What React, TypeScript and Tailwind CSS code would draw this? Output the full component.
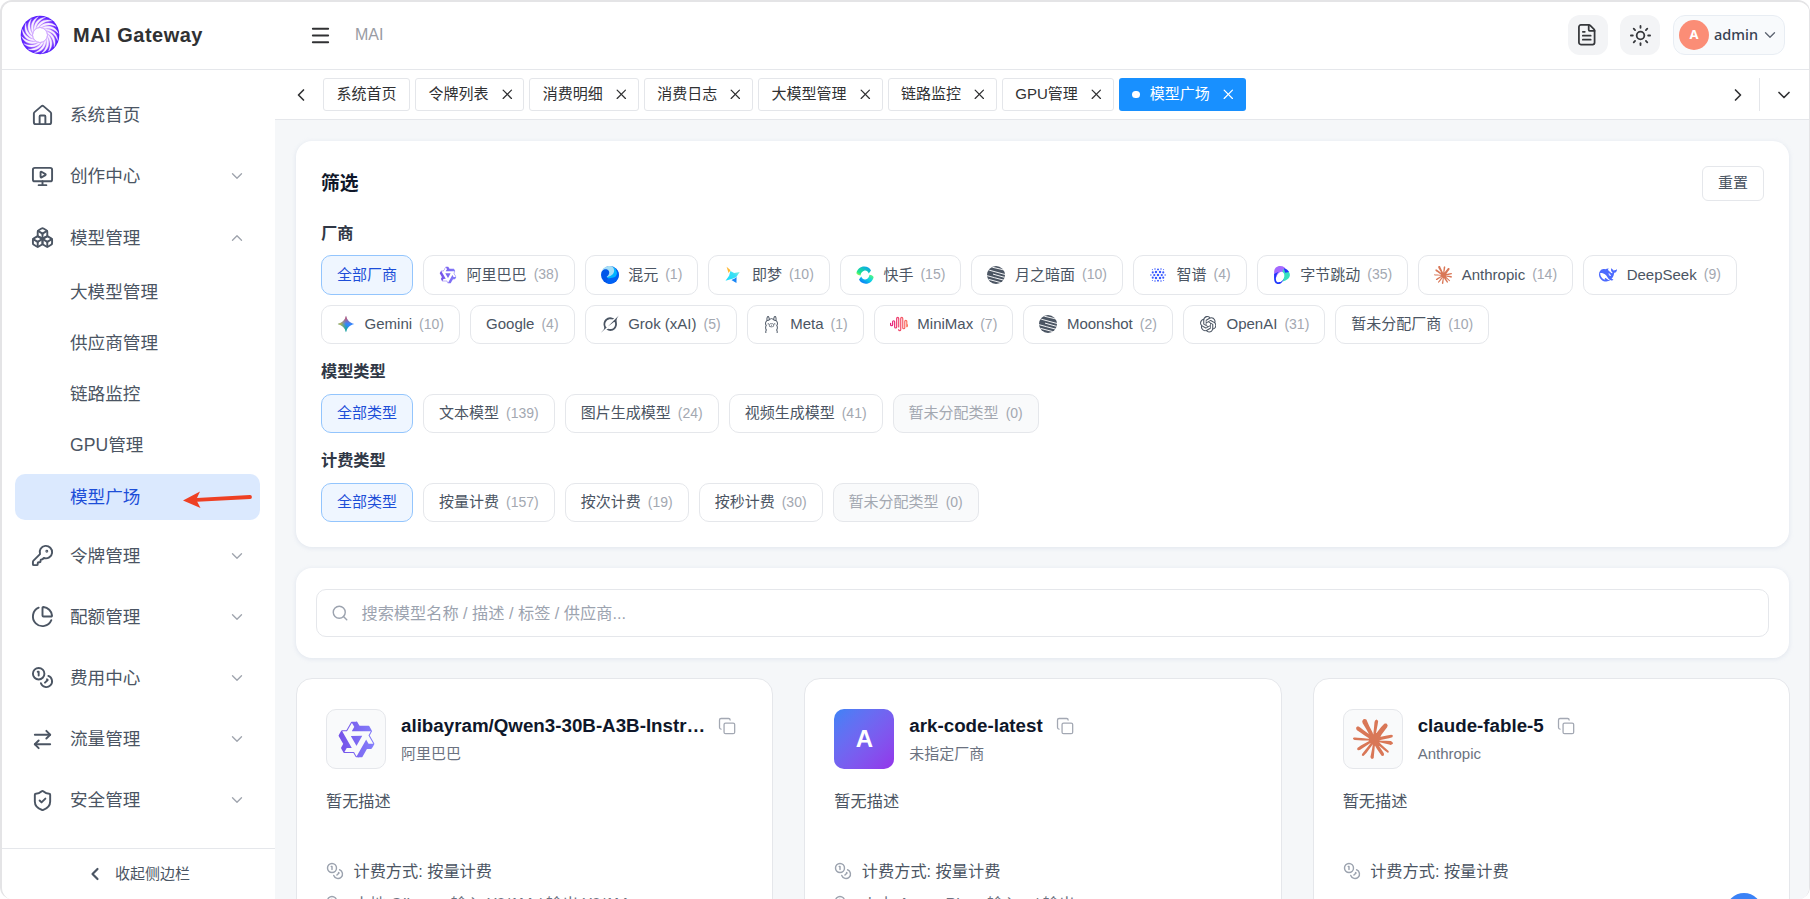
import type { ReactNode } from 'react';
import {
  ArrowRightLeft, Boxes, ChevronDown, ChevronLeft, ChevronRight, ChevronUp, Coins, Copy,
  FileText, House, KeyRound, Menu, MonitorPlay, ChartPie, Search, ShieldCheck, Sun, X,
} from 'lucide-react';
import { SiClaude, SiOllama, SiOpenai } from 'react-icons/si';

/* ---------- brand marks ---------- */

function GatewayLogo() {
  const blades = Array.from({ length: 16 }, (_, i) => i * 22.5);
  return (
    <svg viewBox="0 0 40 40" className="size-10 shrink-0">
      <defs>
        <radialGradient id="gw" gradientUnits="userSpaceOnUse" cx="20" cy="20" r="20">
          <stop offset="0.35" stopColor="#c58cff" />
          <stop offset="0.7" stopColor="#8f4dff" />
          <stop offset="1" stopColor="#4a12ff" />
        </radialGradient>
      </defs>
      <circle cx="20" cy="20" r="19.300" fill="url(#gw)" />
      {blades.map((a) => (
        <path
          key={a}
          d="M19 12.500C24 7 31.500 6.500 36.300 11.500 31 9 25 9.500 21 12.800z"
          fill="#f8f1ff"
          stroke="#f8f1ff"
          strokeWidth="0.300"
          transform={`rotate(${a} 20 20)`}
        />
      ))}
      <circle cx="20" cy="20" r="7" fill="#fff" />
      <circle cx="20" cy="20" r="7.600" fill="none" stroke="#d3adff" strokeWidth="1" />
    </svg>
  );
}

function Qwen({ className }: { className: string }) {
  return (
    <svg viewBox="0 0 24 24" className={className} fillRule="evenodd">
      <defs>
        <linearGradient id="qw" x1="0" x2="1" y1="0" y2="0">
          <stop offset="0" stopColor="#7450e8" />
          <stop offset="1" stopColor="#8580fb" />
        </linearGradient>
      </defs>
      <path
        fill="url(#qw)"
        d="M12.604 1.34c.393.69.784 1.382 1.174 2.075a.18.18 0 00.157.091h5.552c.174 0 .322.11.446.327l1.454 2.57c.19.337.24.478.024.837-.26.43-.513.864-.76 1.3l-.367.658c-.106.196-.223.28-.04.512l2.652 4.637c.172.301.111.494-.043.77-.437.785-.882 1.564-1.335 2.34-.159.272-.352.375-.68.37-.777-.016-1.552-.01-2.327.016a.099.099 0 00-.081.05 575.097 575.097 0 01-2.705 4.74c-.169.293-.38.363-.725.364-.997.003-2.002.004-3.017.002a.537.537 0 01-.465-.271l-1.335-2.323a.09.09 0 00-.083-.049H4.982c-.285.03-.553-.001-.805-.092l-1.603-2.77a.543.543 0 01-.002-.54l1.207-2.12a.198.198 0 000-.197 550.951 550.951 0 01-1.875-3.272l-.79-1.395c-.16-.31-.173-.496.095-.965.465-.813.927-1.625 1.387-2.436.132-.234.304-.334.584-.335a338.3 338.3 0 012.589-.001.124.124 0 00.107-.063l2.806-4.895a.488.488 0 01.422-.246c.524-.001 1.053 0 1.583-.006L11.704 1c.341-.003.724.032.9.34zm-3.432.403a.06.06 0 00-.052.03L6.254 6.788a.157.157 0 01-.135.078H3.253c-.056 0-.07.025-.041.074l5.81 10.156c.025.042.013.062-.034.063l-2.795.015a.218.218 0 00-.2.116l-1.32 2.31c-.044.078-.021.118.068.118l5.716.008c.046 0 .08.02.104.061l1.403 2.454c.046.081.092.082.139 0l5.006-8.76.783-1.382a.055.055 0 01.096 0l1.424 2.53a.122.122 0 00.107.062l2.763-.02a.04.04 0 00.035-.02.041.041 0 000-.04l-2.9-5.086a.108.108 0 010-.113l.293-.507 1.12-1.977c.024-.041.012-.062-.035-.062H9.2c-.059 0-.073-.026-.043-.077l1.434-2.505a.107.107 0 000-.114L9.225 1.774a.06.06 0 00-.053-.031zm6.29 8.02c.046 0 .058.02.034.06l-.832 1.465-2.613 4.585a.056.056 0 01-.05.029.058.058 0 01-.05-.029L8.498 9.841c-.02-.034-.01-.052.028-.054l.216-.012 6.722-.012z"
      />
    </svg>
  );
}

function Hunyuan() {
  return (
    <svg viewBox="0 0 24 24" className="size-[18px]">
      <circle cx="12" cy="12" r="12" fill="#0055e9" />
      <path d="M12 0C6.500 0 2.500 3 1 7c2.500-3.500 7-3.500 9-1 2.200 3 .5 6-2.500 8.500 4 2.500 10 1.500 12-3C21.500 6.500 18 .5 12 0z" fill="#a8dff5" />
      <path d="M15 .8c3 2.700 3.500 7 1 9.700-2 2.200-5 3-8 4.500 2 3 7.500 3.500 11 .5 3-2.700 3-7.500 1-10.500C18.500 2.700 17 1.500 15 .8z" fill="#00b4ff" />
      <path d="M20.500 3.800C24 8 25 15 20 20c-3 2.800-7 4.200-10.500 3.500-3-2-2.500-5.500.5-7 4-1.500 9 0 11-5 .8-2.700.5-5.500-.5-7.700z" fill="#0062f5" />
    </svg>
  );
}

function Jimeng() {
  return (
    <svg viewBox="0 0 24 24" className="size-[18px]">
      <defs>
        <linearGradient id="jm" x1="0" x2="1" y1="1" y2="0">
          <stop offset="0" stopColor="#18e0ff" />
          <stop offset="0.6" stopColor="#39dff5" />
          <stop offset="1" stopColor="#9af3d8" />
        </linearGradient>
      </defs>
      <path d="M3.500 1l5.200 4.600-2.600 3.800z" fill="#ffb62e" />
      <path d="M8.500 6.500L13.500 9.300l7.500-1.300-4.600 6.500-4.200 2.300L2 19.500l4.800-6.500z" fill="url(#jm)" />
      <path d="M16.800 14.500l-.2 8-6.800-3.700 4.500-2.300z" fill="#1a86f5" />
    </svg>
  );
}

function Kling() {
  return (
    <svg viewBox="0 0 24 24" className="size-[18px]">
      <defs>
        <linearGradient id="kl1" x1="0" x2="1" y1="1" y2="0">
          <stop offset="0" stopColor="#d8ff3a" />
          <stop offset="0.25" stopColor="#1ce88c" />
          <stop offset="1" stopColor="#0797ff" />
        </linearGradient>
        <linearGradient id="kl2" x1="0" x2="1" y1="1" y2="0">
          <stop offset="0" stopColor="#0760ff" />
          <stop offset="0.6" stopColor="#10d8e0" />
          <stop offset="1" stopColor="#6cff5a" />
        </linearGradient>
      </defs>
      <path d="M.5 9.500C1.500 4 6 .5 11 .5c4 0 7.500 2 9 5.500l-3 4C16 7 13.500 5.500 11.500 6 8.500 7 6.500 9 6 12.500 4 12.500 1.800 11.500.5 9.500z" fill="url(#kl1)" />
      <path d="M23.500 14.500C22.500 20 18 23.500 13 23.500c-4 0-7.500-2-9-5.500l3-4c1 3 3.500 4.500 5.500 4 3-1 5-3 5.500-6.500 2 0 4.200 1 5.500 3z" fill="url(#kl2)" />
    </svg>
  );
}

function Moonshot() {
  return (
    <svg viewBox="0 0 24 24" className="size-[18px]">
      <defs>
        <clipPath id="ms"><circle cx="12" cy="12" r="12" /></clipPath>
      </defs>
      <g clipPath="url(#ms)">
        <rect width="24" height="24" fill="#4b5563" />
        <g fill="none" stroke="#fff" strokeWidth="1.250">
          <path d="M7 1.600L25 5.800" />
          <path d="M3 5.600L25 11.600" />
          <path d="M8 10.800L25 15.600" />
          <path d="M-1 12.600L10 15.600L25 19.600" />
          <path d="M2 17.800L20 22.600" />
        </g>
      </g>
    </svg>
  );
}

const zhipuDots: [number, number, number][] = [
  [12, 12, 1.7],
  [9.3, 8, 1.6], [14.7, 8, 1.6], [9.3, 16, 1.6], [14.7, 16, 1.6], [7, 12, 1.5], [17, 12, 1.5],
  [5, 8.500, 1.4], [19, 8.500, 1.4], [5, 15.500, 1.4], [19, 15.500, 1.4],
  [12, 4.500, 1.3], [12, 19.500, 1.3], [8, 4, 1], [16, 4, 1], [8, 20, 1], [16, 20, 1],
  [2.500, 12, 1], [21.500, 12, 1], [4.500, 4.800, 0.700], [19.500, 4.800, 0.700], [4.500, 19.200, 0.700], [19.500, 19.200, 0.700],
];

function Zhipu() {
  return (
    <svg viewBox="0 0 24 24" className="size-[18px]" fill="#3859ff">
      {zhipuDots.map(([x, y, r]) => (
        <circle key={`${x}-${y}`} cx={x} cy={y} r={r} />
      ))}
    </svg>
  );
}

function Doubao() {
  return (
    <svg viewBox="0 0 24 24" className="size-[18px]">
      <path d="M1.500 17V8C1.500 3 5 0 9.500 0c4.500 0 7.500 2.500 8.500 7z" fill="#a569ff" />
      <path d="M13 4.500C18.500 4.500 22.500 7.500 22.500 11.500c0 4.700-4.500 7.500-9.500 9z" fill="#37e1be" />
      <path d="M14.500 3c3 .5 5.500 2.500 7 5L16 9z" fill="#1e37fc" />
      <path d="M1.500 10.500l6-3C4 11 3.500 15 4 18.500c.5 3 3 3.800 5.500 2.500 2-1 3.300-2.500 4.500-4.500C13.500 21 10.500 24 7 24c-3.500 0-5.500-3-5.500-7z" fill="#1e37fc" />
      <ellipse cx="9.800" cy="14.600" rx="4.900" ry="7.200" transform="rotate(24 9.800 14.600)" fill="#fff" />
    </svg>
  );
}

function DeepSeek() {
  return (
    <svg viewBox="0 0 24 24" className="size-[18px]" fill="#4d6bfe">
      <path d="M23.748 4.482c-.254-.124-.364.113-.512.234-.051.039-.094.09-.137.136-.372.397-.806.657-1.373.626-.829-.046-1.537.214-2.163.848-.133-.782-.575-1.248-1.247-1.548-.352-.156-.708-.311-.955-.65-.172-.241-.219-.51-.305-.774-.055-.16-.11-.323-.293-.35-.2-.031-.278.136-.356.276-.313.572-.434 1.202-.422 1.84.027 1.436.633 2.58 1.838 3.393.137.093.172.187.129.323-.082.28-.18.552-.266.833-.055.179-.137.217-.329.14a5.526 5.526 0 01-1.736-1.18c-.857-.828-1.631-1.742-2.597-2.458a11.365 11.365 0 00-.689-.471c-.985-.957.13-1.743.388-1.836.27-.098.093-.432-.779-.428-.872.004-1.67.295-2.687.684a3.055 3.055 0 01-.465.137 9.597 9.597 0 00-2.883-.102c-1.885.21-3.39 1.102-4.497 2.623C.082 8.606-.231 10.684.152 12.85c.403 2.284 1.569 4.175 3.36 5.653 1.858 1.533 3.997 2.284 6.438 2.14 1.482-.085 3.133-.284 4.994-1.86.47.234.962.327 1.78.397.63.059 1.236-.03 1.705-.128.735-.156.684-.837.419-.961-2.155-1.004-1.682-.595-2.113-.926 1.096-1.296 2.746-2.642 3.392-7.003.05-.347.007-.565 0-.845-.004-.17.035-.237.23-.256a4.173 4.173 0 001.545-.475c1.396-.763 1.96-2.015 2.093-3.517.02-.23-.004-.467-.247-.588zM11.581 18c-2.089-1.642-3.102-2.183-3.52-2.16-.392.024-.321.471-.235.763.09.288.207.486.371.739.114.167.192.416-.113.603-.673.416-1.842-.14-1.897-.167-1.361-.802-2.5-1.86-3.301-3.307-.774-1.393-1.224-2.887-1.298-4.482-.02-.386.093-.522.477-.592a4.696 4.696 0 011.529-.039c2.132.312 3.946 1.265 5.468 2.774.868.86 1.525 1.887 2.202 2.891.72 1.066 1.494 2.082 2.48 2.914.348.292.625.514.891.677-.802.09-2.14.11-3.054-.614zm1-6.44a.306.306 0 01.415-.287.302.302 0 01.2.288.306.306 0 01-.31.307.303.303 0 01-.304-.308zm3.11 1.596c-.2.081-.399.151-.59.16a1.245 1.245 0 01-.798-.254c-.274-.23-.47-.358-.552-.758a1.73 1.73 0 01.016-.588c.07-.327-.008-.537-.239-.727-.187-.156-.426-.199-.688-.199a.559.559 0 01-.254-.078c-.11-.054-.2-.19-.114-.358.028-.054.16-.186.192-.21.356-.202.767-.136 1.146.016.352.144.618.408 1.001.782.391.451.462.576.685.914.176.265.336.537.445.848.067.195-.019.354-.25.452z" />
    </svg>
  );
}

function Gemini() {
  const d = 'M12 1c1.300 6 4.700 9.400 11 11-6.300 1.600-9.700 5-11 11C10.700 17 7.300 13.600 1 12c6.300-1.600 9.700-5 11-11z';
  return (
    <svg viewBox="0 0 24 24" className="size-[18px]">
      <defs>
        <linearGradient id="gm1" gradientUnits="userSpaceOnUse" x1="1" x2="12" y1="12" y2="12">
          <stop offset="0" stopColor="#fabc12" />
          <stop offset="1" stopColor="#fabc12" stopOpacity="0" />
        </linearGradient>
        <linearGradient id="gm2" gradientUnits="userSpaceOnUse" x1="12" x2="12" y1="1" y2="12">
          <stop offset="0" stopColor="#f94543" />
          <stop offset="1" stopColor="#f94543" stopOpacity="0" />
        </linearGradient>
        <linearGradient id="gm3" gradientUnits="userSpaceOnUse" x1="9" x2="14" y1="22" y2="13">
          <stop offset="0" stopColor="#08b962" />
          <stop offset="1" stopColor="#08b962" stopOpacity="0" />
        </linearGradient>
      </defs>
      <path d={d} fill="#3186ff" />
      <path d={d} fill="url(#gm3)" />
      <path d={d} fill="url(#gm2)" />
      <path d={d} fill="url(#gm1)" />
    </svg>
  );
}

function Grok() {
  return (
    <svg viewBox="0 0 24 24" className="size-[18px]" fill="#4b5563">
      <path d="M9.27 15.29l7.978-5.897c.391-.29.95-.177 1.137.272.98 2.369.542 5.215-1.41 7.169-1.951 1.954-4.667 2.382-7.149 1.406l-2.711 1.257c3.889 2.661 8.611 2.003 11.562-.953 2.341-2.344 3.066-5.539 2.388-8.42l.006.007c-.983-4.232.242-5.924 2.75-9.383.06-.082.12-.164.179-.248l-3.301 3.305v-.01L9.267 15.292M7.623 16.723c-2.792-2.67-2.31-6.801.071-9.184 1.761-1.763 4.647-2.483 7.166-1.425l2.705-1.25a7.808 7.808 0 00-1.829-1A8.975 8.975 0 005.984 5.83c-2.533 2.536-3.33 6.436-1.962 9.764 1.022 2.487-.653 4.246-2.34 6.022-.599.63-1.199 1.259-1.682 1.925l7.62-6.815" />
    </svg>
  );
}

function MiniMax() {
  return (
    <svg viewBox="0 0 24 24" className="size-[18px]">
      <defs>
        <linearGradient id="mm" gradientUnits="userSpaceOnUse" x1="0" x2="24" y1="0" y2="0">
          <stop offset="0" stopColor="#e2167e" />
          <stop offset="1" stopColor="#fe7a5c" />
        </linearGradient>
      </defs>
      <path
        d="M.8 11v2a1.300 1.300 0 0 0 2.700 0V9a1.300 1.300 0 0 1 2.700 0v7a1.300 1.300 0 0 0 2.700 0V4.500a1.300 1.300 0 0 1 2.700 0V16M11.600 19.500a1.300 1.300 0 0 0 2.700 0v-15a1.300 1.300 0 0 1 2.700 0V17a1.300 1.300 0 0 0 2.700 0V8.500a1.300 1.300 0 0 1 2.700 0v7M23.200 13v2"
        fill="none"
        stroke="url(#mm)"
        strokeWidth="1.600"
        strokeLinecap="round"
      />
    </svg>
  );
}

/* ---------- sidebar ---------- */

const subItems = ['大模型管理', '供应商管理', '链路监控', 'GPU管理', '模型广场'];

function NavItem({ icon, label, chevron }: { icon: ReactNode; label: string; chevron?: 'up' | 'down' }) {
  return (
    <div className="mb-[5.2px] flex h-14 items-center pr-[29px] pl-[28.500px] text-[17.6px] text-[#4b5563]">
      <span className="flex w-[39.500px] shrink-0">{icon}</span>
      <span className="flex-1 leading-6">{label}</span>
      {chevron === 'down' && <ChevronDown size={18} strokeWidth={1.8} color="#a0a5ae" />}
      {chevron === 'up' && <ChevronUp size={18} strokeWidth={1.8} color="#a0a5ae" />}
    </div>
  );
}

function Sidebar() {
  return (
    <aside className="flex w-[273px] shrink-0 flex-col bg-white">
      <nav className="flex-1 overflow-hidden pt-[17.300px]">
        <NavItem icon={<House size={23} />} label="系统首页" />
        <NavItem icon={<MonitorPlay size={23} />} label="创作中心" chevron="down" />
        <NavItem icon={<Boxes size={23} />} label="模型管理" chevron="up" />
        <div className="-mt-[2.300px] pb-[2.500px]">
          {subItems.map((s) => (
            <div
              key={s}
              className={
                s === '模型广场'
                  ? 'mr-[15px] mb-[5.300px] ml-[13px] flex h-[46px] items-center rounded-[10px] bg-[#dbe9fe] pl-[55px] text-[17.6px] leading-6 text-[#1d4ed8]'
                  : 'mr-[15px] mb-[5.300px] ml-[13px] flex h-[46px] items-center rounded-[10px] pl-[55px] text-[17.6px] leading-6 text-[#4b5563]'
              }
            >
              <span>{s}</span>
              {s === '模型广场' && (
                <svg viewBox="0 0 70 18" className="mt-[7px] mr-[7px] ml-auto h-[18px] w-[70px]">
                  <path d="M67 6L14 8.800" stroke="#ee4024" strokeWidth="3.800" strokeLinecap="round" />
                  <path d="M0 9.500L17 .5 13.200 8.800 17.500 17z" fill="#ee4024" />
                </svg>
              )}
            </div>
          ))}
        </div>
        <NavItem icon={<KeyRound size={23} />} label="令牌管理" chevron="down" />
        <NavItem icon={<ChartPie size={23} />} label="配额管理" chevron="down" />
        <NavItem icon={<Coins size={23} />} label="费用中心" chevron="down" />
        <NavItem icon={<ArrowRightLeft size={23} />} label="流量管理" chevron="down" />
        <NavItem icon={<ShieldCheck size={23} />} label="安全管理" chevron="down" />
      </nav>
      <div className="flex h-[51px] items-center justify-center gap-2.5 border-t border-[#e5e7eb] pr-[2px] text-[15px] text-[#4b5563]">
        <ChevronLeft size={20} strokeWidth={2.600} />
        <span className="leading-5">收起侧边栏</span>
      </div>
    </aside>
  );
}

/* ---------- top bars ---------- */

function Header() {
  return (
    <header className="flex h-[68px] shrink-0 items-center border-b border-[#e5e7eb] bg-white pr-[24px] pb-px pl-[17.500px]">
      <GatewayLogo />
      <div className="ml-[13.500px] w-[236px] text-xl font-bold tracking-[0.5px] text-[#303133]">MAI Gateway</div>
      <Menu size={23} strokeWidth={2} color="#303133" />
      <span className="ml-[23px] text-base text-[#999ca3]">MAI</span>
      <div className="ml-auto flex items-center gap-3">
        <div className="flex size-10 items-center justify-center rounded-xl bg-[#f3f4f6] text-[#36383c]">
          <FileText size={23.500} strokeWidth={1.800} className="mr-[2px]" />
        </div>
        <div className="flex size-10 items-center justify-center rounded-xl bg-[#f3f4f6] text-[#36383c]">
          <Sun size={23} strokeWidth={1.900} />
        </div>
        <div className="ml-px flex h-10 w-28 items-center rounded-xl border border-[#e8edf3] bg-[#f8fafc] pl-[5px]">
          <div className="flex size-[30px] items-center justify-center rounded-full bg-[#fb8d76] font-['Noto_Sans'] text-[13px] font-bold text-white">
            A
          </div>
          <span className="ml-[5px] font-['Noto_Sans'] text-[14.500px] font-medium text-[#374151]">admin</span>
          <ChevronDown size={18} strokeWidth={1.800} className="ml-[3px]" color="#5f6673" />
        </div>
      </div>
    </header>
  );
}

const tabs = ['令牌列表', '消费明细', '消费日志', '大模型管理', '链路监控', 'GPU管理'];

function TabBar() {
  return (
    <div className="flex h-[50px] shrink-0 items-center border-b border-[#e5e7eb] bg-white pl-[16px] text-[15px] leading-5 text-[#303133]">
      <ChevronLeft size={20} strokeWidth={2} />
      <div className="ml-[12px] flex gap-[5.100px]">
        <div className="flex h-[33px] items-center rounded-[3px] border border-[#e4e6ea] px-[12.500px] pb-px">系统首页</div>
        {tabs.map((t) => (
          <div key={t} className="flex h-[33px] items-center gap-[10.200px] rounded-[3px] border border-[#e4e6ea] pr-[8.200px] pl-[12.300px]">
            <span className="pb-px">{t}</span>
            <X size={16.600} strokeWidth={1.800} />
          </div>
        ))}
        <div className="flex h-[33px] items-center rounded-[3px] bg-[#1890ff] pr-[9.200px] pl-[13.500px] text-white">
          <span className="mr-2.5 size-[7.500px] rounded-full bg-white" />
          <span className="mr-[10px] pb-px">模型广场</span>
          <X size={16.600} strokeWidth={1.800} />
        </div>
      </div>
      <div className="ml-auto flex h-[33px] items-center">
        <ChevronRight size={20} strokeWidth={2} />
        <div className="ml-[11px] h-full w-px bg-[#e4e6ea]" />
        <ChevronDown size={20} strokeWidth={2} className="mr-[15px] ml-[14px]" />
      </div>
    </div>
  );
}

/* ---------- filters ---------- */

type Chip = { label: string; count?: number; icon?: ReactNode; state?: 'active' | 'disabled' };

const vendors: Chip[] = [
  { label: '全部厂商', state: 'active' },
  { label: '阿里巴巴', count: 38, icon: <Qwen className="size-[18px]" /> },
  { label: '混元', count: 1, icon: <Hunyuan /> },
  { label: '即梦', count: 10, icon: <Jimeng /> },
  { label: '快手', count: 15, icon: <Kling /> },
  { label: '月之暗面', count: 10, icon: <Moonshot /> },
  { label: '智谱', count: 4, icon: <Zhipu /> },
  { label: '字节跳动', count: 35, icon: <Doubao /> },
  { label: 'Anthropic', count: 14, icon: <SiClaude size={18} color="#d97757" /> },
  { label: 'DeepSeek', count: 9, icon: <DeepSeek /> },
  { label: 'Gemini', count: 10, icon: <Gemini /> },
  { label: 'Google', count: 4 },
  { label: 'Grok (xAI)', count: 5, icon: <Grok /> },
  { label: 'Meta', count: 1, icon: <SiOllama size={17} color="#4b5563" /> },
  { label: 'MiniMax', count: 7, icon: <MiniMax /> },
  { label: 'Moonshot', count: 2, icon: <Moonshot /> },
  { label: 'OpenAI', count: 31, icon: <SiOpenai size={16.500} color="#4b5563" /> },
  { label: '暂未分配厂商', count: 10 },
];

const modelTypes: Chip[] = [
  { label: '全部类型', state: 'active' },
  { label: '文本模型', count: 139 },
  { label: '图片生成模型', count: 24 },
  { label: '视频生成模型', count: 41 },
  { label: '暂未分配类型', count: 0, state: 'disabled' },
];

const billingTypes: Chip[] = [
  { label: '全部类型', state: 'active' },
  { label: '按量计费', count: 157 },
  { label: '按次计费', count: 19 },
  { label: '按秒计费', count: 30 },
  { label: '暂未分配类型', count: 0, state: 'disabled' },
];

const chipTone = {
  normal: 'border-[#e5e7eb] bg-white text-[#4b5563]',
  active: 'border-[#93c5fd] bg-[#eff6ff] text-[#1d4ed8]',
  disabled: 'border-[#e5e7eb] bg-[#f9fafb] text-[#a3a8b1]',
};

function ChipRow({ title, chips, className }: { title: string; chips: Chip[]; className: string }) {
  return (
    <section className={className}>
      <h3 className="text-[16.200px] leading-6 font-semibold text-[#303846]">{title}</h3>
      <div className="mt-[10.200px] flex flex-wrap gap-2.5">
        {chips.map((c) => (
          <div
            key={c.label}
            className={`flex h-[39.500px] items-center rounded-[10px] border px-[15px] text-[15px] leading-5 ${chipTone[c.state ?? 'normal']}`}
          >
            {c.icon && <span className="mr-[9.600px] flex w-[18px] shrink-0 justify-center">{c.icon}</span>}
            <span>{c.label}</span>
            {c.count !== undefined && <span className="ml-[7px] pb-px text-[14px] text-[#a3a8b1]">({c.count})</span>}
          </div>
        ))}
      </div>
    </section>
  );
}

/* ---------- model cards ---------- */

function ModelCard({ logo, name, vendor, route }: { logo: ReactNode; name: string; vendor: string; route?: string }) {
  return (
    <article className="h-[320px] min-w-0 rounded-2xl border border-[#e5e7eb] bg-white px-[29px] pt-[30px]">
      <div className="flex items-center">
        {logo}
        <div className="ml-[15px] min-w-0 flex-1">
          <div className="flex items-center">
            <h2 className="text-[18.750px] leading-7 font-bold whitespace-nowrap text-[#0f172a]">{name}</h2>
            <Copy size={18.200} strokeWidth={1.700} className="mt-px ml-[13px] shrink-0" color="#a3a8b3" />
          </div>
          <div className="mt-[2px] mb-px text-[15px] leading-6 text-[#6b7280]">{vendor}</div>
        </div>
      </div>
      <p className="mt-[20px] text-[16.200px] leading-6 text-[#4b5563]">暂无描述</p>
      <div className="mt-[46px] flex items-center text-[16.200px] leading-6 text-[#4b5563]">
        <Coins size={18} strokeWidth={1.900} color="#9ca3af" />
        <span className="ml-[9.500px]">计费方式: 按量计费</span>
      </div>
      {route && (
        <div className="mt-[8.500px] flex items-center text-[16.200px] leading-6 text-[#6b7280]">
          <Coins size={18} strokeWidth={1.900} color="#9ca3af" />
          <span className="ml-[9.500px]">{route}</span>
        </div>
      )}
    </article>
  );
}

const logoBox = 'flex size-[60px] shrink-0 items-center justify-center rounded-[10px] border border-[#e5e7eb] bg-[#f9fafb]';

export default function App() {
  return (
    <div className="relative flex h-[899px] w-[1810px] flex-col overflow-hidden rounded-xl border-t-2 border-r border-l-2 border-[#e4e4e6] bg-white font-['Liberation_Sans','Noto_Sans_CJK_SC',sans-serif]">
      <Header />
      <div className="flex min-h-0 flex-1">
        <Sidebar />
        <div className="flex min-w-0 flex-1 flex-col bg-[#f5f7f9]">
          <TabBar />
          <main className="min-h-0 flex-1 overflow-hidden pt-[21px] pl-[21px]">
            <div className="h-[406px] w-[1493px] rounded-2xl bg-white px-[25px] pt-[25px] shadow-[0_1px_5px_rgba(148,170,200,0.22)]">
              <div className="flex h-[35px] items-center justify-between">
                <h1 className="text-[18.750px] leading-7 font-bold text-[#0f172a]">筛选</h1>
                <button className="h-[35px] w-[62px] rounded-md border border-[#e5e7eb] bg-white pb-px text-[15px] leading-5 text-[#4b5563]">重置</button>
              </div>
              <ChipRow className="mt-[20px]" title="厂商" chips={vendors} />
              <ChipRow className="mt-[15.200px]" title="模型类型" chips={modelTypes} />
              <ChipRow className="mt-[15.300px]" title="计费类型" chips={billingTypes} />
            </div>

            <div className="mt-[21px] h-[90px] w-[1493px] rounded-2xl bg-white px-5 pt-[21px] shadow-[0_1px_5px_rgba(148,170,200,0.22)]">
              <div className="flex h-[48px] items-center rounded-[10px] border border-[#e5e7eb] px-[14px] text-[16.200px] leading-6 text-[#9ca3af]">
                <Search size={18} strokeWidth={1.900} />
                <span className="ml-[12.500px]">搜索模型名称 / 描述 / 标签 / 供应商...</span>
              </div>
            </div>

            <div className="mt-5 grid w-[1494px] grid-cols-3 gap-[31px]">
              <ModelCard
                logo={<div className={logoBox}><Qwen className="size-[39px]" /></div>}
                name="alibayram/Qwen3-30B-A3B-Instr…"
                vendor="阿里巴巴"
                route="本地 Ollama: 输入 ¥0/1M / 输出 ¥0/1M"
              />
              <ModelCard
                logo={
                  <div className="flex size-[60px] shrink-0 items-center justify-center rounded-[10px] bg-linear-to-br from-[#3b82f6] to-[#9333ea] text-[24px] font-bold text-white">
                    A
                  </div>
                }
                name="ark-code-latest"
                vendor="未指定厂商"
                route="火山 Agent Plan: 输入 - / 输出 -"
              />
              <ModelCard
                logo={<div className={logoBox}><SiClaude size={40} color="#d97757" /></div>}
                name="claude-fable-5"
                vendor="Anthropic"
              />
            </div>
          </main>
        </div>
      </div>
      <div className="absolute top-[891px] left-[1724px] size-9 rounded-full bg-[#3b82f6]" />
    </div>
  );
}
